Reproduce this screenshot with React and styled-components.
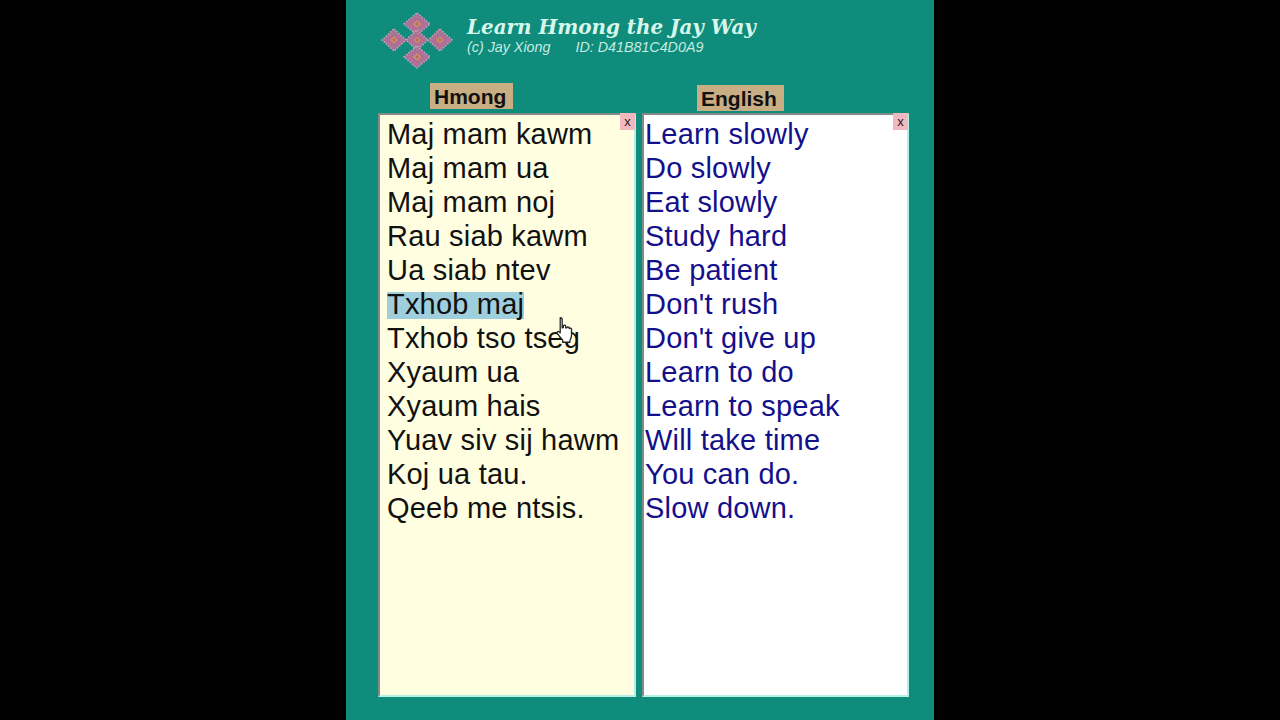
import styled, { createGlobalStyle } from "styled-components";

const hmong = [
    "Maj mam kawm",
    "Maj mam ua",
    "Maj mam noj",
    "Rau siab kawm",
    "Ua siab ntev",
    "Txhob maj",
    "Txhob tso tseg",
    "Xyaum ua",
    "Xyaum hais",
    "Yuav siv sij hawm",
    "Koj ua tau.",
    "Qeeb me ntsis."
];

const english = [
    "Learn slowly",
    "Do slowly",
    "Eat slowly",
    "Study hard",
    "Be patient",
    "Don't rush",
    "Don't give up",
    "Learn to do",
    "Learn to speak",
    "Will take time",
    "You can do.",
    "Slow down."
];

const Diamond = ({ x, y, w, h }) => {
    const shape = (k) => `M0 ${-h * k} L${w * k} 0 L0 ${h * k} L${-w * k} 0 Z`;
    return (
        <g transform={`translate(${x} ${y})`}>
            <path d={shape(1)} fill="#ab7096" />
            <path d={shape(1)} fill="none" stroke="#c8a6ba" strokeWidth="1.6" strokeDasharray="1.5 1.5" />
            <path d={shape(0.68)} fill="#b5689a" />
            <path d={shape(0.68)} fill="none" stroke="#a3a08c" strokeWidth="1" strokeDasharray="1 2" />
            <path d={shape(0.36)} fill="#c49068" />
            <circle r="1.4" fill="#b86a60" />
        </g>
    );
};

const Logo = () => (
    <svg width="74" height="58" viewBox="0 0 74 58">
        <Diamond x={36} y={12} w={13} h={11} />
        <Diamond x={13} y={28} w={12} h={11} />
        <Diamond x={59} y={28} w={12} h={11} />
        <Diamond x={36} y={28} w={11} h={10} />
        <Diamond x={36} y={45} w={13} h={11} />
    </svg>
);

const HandCursor = () => (
    <svg width="20" height="28" viewBox="0 0 16 24">
        <path
            d="M4 1.5c1 0 1.6.7 1.6 1.7v7l1-.3V8.6c0-1 1.8-1 2 0v1.6l1-.1c.2-1 1.9-1 2 .1v.6c.4-.8 2-.6 2 .5v5.2c0 1.8-.7 3-1.4 4.4v1.6H6v-1.8c-1-1.5-3-3.4-4.6-5.8-.7-1.1.6-2.2 1.6-1.4l.9.9V3.2c0-1 .1-1.7 0-1.7z"
            fill="#fff"
            stroke="#222"
            strokeWidth="1.1"
            strokeLinejoin="round"
        />
    </svg>
);

const App = () => {
    return (
        <>
            <GlobalStyle />
            <Page>
                <Header>
                    <Logo />
                    <HeaderText>
                        <Title>Learn Hmong the Jay Way</Title>
                        <SubTitle>
                            <span>(c) Jay Xiong</span>
                            <span>ID: D41B81C4D0A9</span>
                        </SubTitle>
                    </HeaderText>
                </Header>
                <Columns>
                    <Column $width={258}>
                        <LabelRow $offset={52} $drop={1}>
                            <Label>Hmong</Label>
                        </LabelRow>
                        <ListBox $bg="#fffee0" $color="#111" $pad={7}>
                            <CloseButton>x</CloseButton>
                            {hmong.map((line) => (
                                <Line key={line}>
                                    {line === "Txhob maj" ? <Selected>{line}</Selected> : line}
                                </Line>
                            ))}
                            <CursorSpot>
                                <HandCursor />
                            </CursorSpot>
                        </ListBox>
                    </Column>
                    <Column $width={267}>
                        <LabelRow $offset={55} $drop={3}>
                            <Label>English</Label>
                        </LabelRow>
                        <ListBox $bg="#ffffff" $color="#14108c" $pad={1}>
                            <CloseButton>x</CloseButton>
                            {english.map((line) => (
                                <Line key={line}>{line}</Line>
                            ))}
                        </ListBox>
                    </Column>
                </Columns>
            </Page>
        </>
    );
};

export default App;

const GlobalStyle = createGlobalStyle`
    html, body {
        margin: 0;
        height: 720px;
        overflow: hidden;
        background: #000;
    }
`;

const Page = styled.div`
    box-sizing: border-box;
    width: 588px;
    height: 720px;
    margin-left: 346px;
    padding: 12px 0 0 32px;
    background: #0f8c7c;
    font-family: "Liberation Sans", Arial, sans-serif;
`;

const Header = styled.div`
    display: flex;
    align-items: flex-start;
    gap: 12px;
    height: 70px;
    margin-left: 3px;
`;

const HeaderText = styled.div`
    display: flex;
    flex-direction: column;
    padding-top: 2px;
`;

const Title = styled.div`
    font-family: "DejaVu Serif", serif;
    font-style: italic;
    font-weight: bold;
    font-size: 19.9px;
    line-height: 26px;
    color: #d8f7ea;
`;

const SubTitle = styled.div`
    display: flex;
    gap: 25px;
    font-style: italic;
    font-size: 14.3px;
    line-height: 14px;
    color: #c5ebe0;
`;

const Columns = styled.div`
    display: flex;
    gap: 6px;
`;

const Column = styled.div`
    display: flex;
    flex-direction: column;
    align-items: flex-start;
    width: ${(p) => p.$width}px;
`;

const LabelRow = styled.div`
    box-sizing: border-box;
    height: 31px;
    padding: ${(p) => p.$drop}px 0 0 ${(p) => p.$offset}px;
`;

const Label = styled.div`
    height: 26px;
    padding: 0 7px 0 4px;
    background: #c9ae84;
    color: #111;
    font-size: 21px;
    font-weight: bold;
    line-height: 28px;
`;

const ListBox = styled.div`
    position: relative;
    box-sizing: border-box;
    align-self: stretch;
    height: 584px;
    padding: 2px 0 0 ${(p) => p.$pad}px;
    background: ${(p) => p.$bg};
    color: ${(p) => p.$color};
    border-style: solid;
    border-width: 2px;
    border-color: #7f8c88 #b5f0e6 #b5f0e6 #7f8c88;
`;

const Line = styled.div`
    height: 34px;
    font-size: 29px;
    line-height: 34px;
    letter-spacing: 0.2px;
    white-space: nowrap;
`;

const Selected = styled.span`
    display: inline-block;
    height: 27px;
    line-height: 25px;
    background: #9fcfdd;
`;

const CloseButton = styled.div`
    position: absolute;
    top: -2px;
    right: -1px;
    width: 15px;
    height: 17px;
    background: #f2b8c0;
    color: #222;
    font-size: 13px;
    line-height: 18px;
    text-align: center;
`;

const CursorSpot = styled.div`
    position: absolute;
    left: 175px;
    top: 201px;
    height: 28px;
`;
